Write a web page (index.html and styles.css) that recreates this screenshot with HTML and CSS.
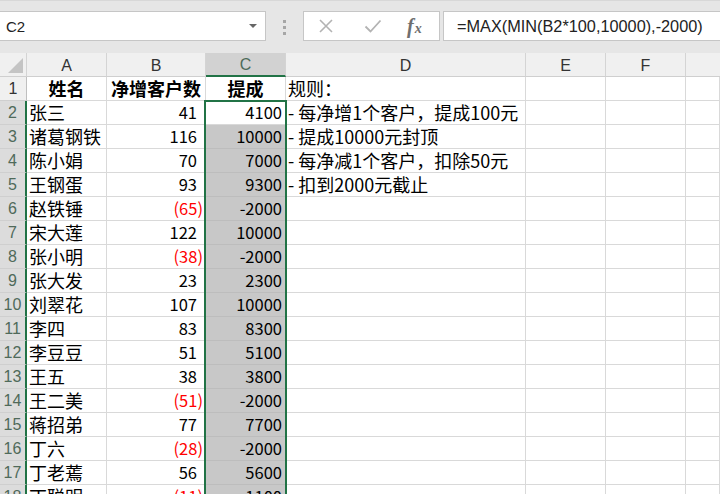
FILE: index.html
```html
<!DOCTYPE html>
<html lang="zh">
<head>
<meta charset="utf-8">
<link rel="stylesheet" href="styles.css">
</head>
<body>
<div class="app">
  <div class="fbar">
    <div class="namebox">
      <span class="nb-text">C2</span>
      <span class="nb-arrow"></span>
    </div>
    <div class="grip"><i></i><i></i><i></i></div>
    <div class="btnbox">
      <svg class="ic ic-x" width="16" height="16" viewBox="0 0 16 16"><path d="M2 2 L14 14 M14 2 L2 14" stroke="#b3b3b3" stroke-width="1.6" fill="none"/></svg>
      <svg class="ic ic-ok" width="18" height="16" viewBox="0 0 18 16"><path d="M1.5 8.5 L6.5 13.5 L16.5 2.5" stroke="#b3b3b3" stroke-width="1.8" fill="none"/></svg>
      <span class="fx"><span class="fx-f">f</span><span class="fx-x">x</span></span>
    </div>
    <div class="formula">=MAX(MIN(B2*100,10000),-2000)</div>
  </div>

  <div class="sheet">
    <div class="grid">
      <div class="h corner"><span class="tri"></span></div>
      <div class="h col">A</div>
      <div class="h col">B</div>
      <div class="h col sel">C</div>
      <div class="h col">D</div>
      <div class="h col">E</div>
      <div class="h col">F</div>
      <div class="h col last"></div>

      <div class="h row">1</div>
      <div class="c b ctr">姓名</div>
      <div class="c b ctr">净增客户数</div>
      <div class="c b ctr">提成</div>
      <div class="c t">规则：</div>
      <div class="c"></div><div class="c"></div><div class="c"></div>

      <div class="h row sel">2</div>
      <div class="c t">张三</div>
      <div class="c n">41</div>
      <div class="c v active">4100</div>
      <div class="c t">- 每净增1个客户，提成100元</div>
      <div class="c"></div><div class="c"></div><div class="c"></div>

      <div class="h row sel">3</div>
      <div class="c t">诸葛钢铁</div>
      <div class="c n">116</div>
      <div class="c v g">10000</div>
      <div class="c t">- 提成10000元封顶</div>
      <div class="c"></div><div class="c"></div><div class="c"></div>

      <div class="h row sel">4</div>
      <div class="c t">陈小娟</div>
      <div class="c n">70</div>
      <div class="c v g">7000</div>
      <div class="c t">- 每净减1个客户，扣除50元</div>
      <div class="c"></div><div class="c"></div><div class="c"></div>

      <div class="h row sel">5</div>
      <div class="c t">王钢蛋</div>
      <div class="c n">93</div>
      <div class="c v g">9300</div>
      <div class="c t">- 扣到2000元截止</div>
      <div class="c"></div><div class="c"></div><div class="c"></div>

      <div class="h row sel">6</div>
      <div class="c t">赵铁锤</div>
      <div class="c n neg">(65)</div>
      <div class="c v g">-2000</div>
      <div class="c"></div><div class="c"></div><div class="c"></div><div class="c"></div>

      <div class="h row sel">7</div>
      <div class="c t">宋大莲</div>
      <div class="c n">122</div>
      <div class="c v g">10000</div>
      <div class="c"></div><div class="c"></div><div class="c"></div><div class="c"></div>

      <div class="h row sel">8</div>
      <div class="c t">张小明</div>
      <div class="c n neg">(38)</div>
      <div class="c v g">-2000</div>
      <div class="c"></div><div class="c"></div><div class="c"></div><div class="c"></div>

      <div class="h row sel">9</div>
      <div class="c t">张大发</div>
      <div class="c n">23</div>
      <div class="c v g">2300</div>
      <div class="c"></div><div class="c"></div><div class="c"></div><div class="c"></div>

      <div class="h row sel">10</div>
      <div class="c t">刘翠花</div>
      <div class="c n">107</div>
      <div class="c v g">10000</div>
      <div class="c"></div><div class="c"></div><div class="c"></div><div class="c"></div>

      <div class="h row sel">11</div>
      <div class="c t">李四</div>
      <div class="c n">83</div>
      <div class="c v g">8300</div>
      <div class="c"></div><div class="c"></div><div class="c"></div><div class="c"></div>

      <div class="h row sel">12</div>
      <div class="c t">李豆豆</div>
      <div class="c n">51</div>
      <div class="c v g">5100</div>
      <div class="c"></div><div class="c"></div><div class="c"></div><div class="c"></div>

      <div class="h row sel">13</div>
      <div class="c t">王五</div>
      <div class="c n">38</div>
      <div class="c v g">3800</div>
      <div class="c"></div><div class="c"></div><div class="c"></div><div class="c"></div>

      <div class="h row sel">14</div>
      <div class="c t">王二美</div>
      <div class="c n neg">(51)</div>
      <div class="c v g">-2000</div>
      <div class="c"></div><div class="c"></div><div class="c"></div><div class="c"></div>

      <div class="h row sel">15</div>
      <div class="c t">蒋招弟</div>
      <div class="c n">77</div>
      <div class="c v g">7700</div>
      <div class="c"></div><div class="c"></div><div class="c"></div><div class="c"></div>

      <div class="h row sel">16</div>
      <div class="c t">丁六</div>
      <div class="c n neg">(28)</div>
      <div class="c v g">-2000</div>
      <div class="c"></div><div class="c"></div><div class="c"></div><div class="c"></div>

      <div class="h row sel">17</div>
      <div class="c t">丁老蔫</div>
      <div class="c n">56</div>
      <div class="c v g">5600</div>
      <div class="c"></div><div class="c"></div><div class="c"></div><div class="c"></div>

      <div class="h row sel">18</div>
      <div class="c t">丁聪明</div>
      <div class="c n neg">(11)</div>
      <div class="c v g">-1100</div>
      <div class="c"></div><div class="c"></div><div class="c"></div><div class="c"></div>
    </div>
    <div class="selection"></div>
  </div>
</div>
</body>
</html>
```

FILE: styles.css
```css
* { box-sizing: border-box; }
html, body { margin: 0; padding: 0; }
body {
  width: 720px;
  height: 494px;
  overflow: hidden;
  background: #ffffff;
  font-family: "Noto Sans CJK SC", "Liberation Sans", sans-serif;
  color: #000;
}
.app { width: 720px; height: 494px; overflow: hidden; }

/* formula bar */
.fbar {
  height: 53px;
  background: #e6e6e6;
  display: flex;
  align-items: flex-start;
  padding-top: 11px;
  border-top: 1px solid #d8d8d8;
}
.namebox {
  width: 266px;
  height: 30px;
  margin-top: -1px;
  background: #fff;
  border: 1px solid #c6c6c6;
  border-left: none;
  display: flex;
  align-items: center;
  justify-content: space-between;
  padding: 0 8px 0 6px;
}
.nb-text {
  font-family: "Liberation Sans", sans-serif;
  font-size: 15px;
  color: #222;
}
.nb-arrow {
  width: 0; height: 0;
  border-left: 4px solid transparent;
  border-right: 4px solid transparent;
  border-top: 4px solid #666;
}
.grip {
  width: 37px;
  height: 30px;
  display: flex;
  flex-direction: column;
  align-items: center;
  justify-content: center;
  gap: 3px;
}
.grip i {
  display: block;
  width: 3px; height: 3px;
  background: #a6a6a6;
}
.btnbox {
  width: 137px;
  height: 30px;
  margin-top: -1px;
  background: #fff;
  border: 1px solid #c6c6c6;
  display: flex;
  align-items: center;
  padding-left: 14px;
}
.ic-x { margin-right: 30px; }
.ic-ok { margin-right: 25px; }
.fx {
  font-family: "Liberation Serif", serif;
  font-style: italic;
  font-weight: bold;
  color: #6f6f6f;
  font-size: 20px;
  line-height: 1;
  display: flex;
  align-items: baseline;
}
.fx-x { font-size: 14px; margin-left: 1px; }
.formula {
  margin-left: 3px;
  flex: 1;
  height: 30px;
  margin-top: -1px;
  background: #fff;
  border: 1px solid #c6c6c6;
  border-right: none;
  padding-left: 13px;
  font-family: "Liberation Sans", sans-serif;
  font-size: 16.3px;
  line-height: 28px;
  color: #222;
}

/* sheet */
.sheet { position: relative; }
.grid {
  display: grid;
  grid-template-columns: 27px 80px 99px 80px 240px 80px 80px 34px;
  grid-auto-rows: 24px;
}
.h {
  background: #f0f0f0;
  border-right: 1px solid #d4d4d4;
  border-bottom: 1px solid #cfcfcf;
  font-family: "Liberation Sans", sans-serif;
  font-size: 16px;
  color: #333;
  display: flex;
  align-items: center;
  justify-content: center;
  line-height: 1;
}
.h.col { padding-top: 2px; }
.h.col.last { border-right: none; }
.h.col.sel {
  background: #d2d2d2;
  color: #4d6b5a;
  border-bottom: 2px solid #217346;
}
.h.row {
  font-size: 16px;
  color: #333;
  border-right: 1px solid #bfbfbf;
}
.h.row.sel {
  background: #dcdcdc;
  color: #4f6a5a;
  border-right: 2px solid #217346;
}
.corner {
  position: relative;
  background: #f0f0f0;
}
.tri {
  position: absolute;
  right: 3px;
  bottom: 3px;
  width: 0; height: 0;
  border-left: 15px solid transparent;
  border-bottom: 15px solid #c4c4c4;
}
.c {
  border-right: 1px solid #d9d9d9;
  border-bottom: 1px solid #d9d9d9;
  font-size: 18px;
  line-height: 23px;
  white-space: nowrap;
  overflow: visible;
  color: #000;
}
.c.t { padding-left: 2px; }
.c.b { font-weight: bold; }
.c.ctr { text-align: center; }
.c.n { text-align: right; padding-right: 8px; font-size: 16.5px; }
.c.n.neg { color: #ff0000; padding-right: 2px; }
.c.v { text-align: right; padding-right: 3px; font-size: 16.5px; }
.c.g { background: #c8c8c8; border-bottom-color: #bdbdbd; }
.c.active { background: #fff; }

.selection {
  position: absolute;
  left: 204px;
  top: 47px;
  width: 83px;
  height: 420px;
  border: 2px solid #217346;
  pointer-events: none;
}
```
